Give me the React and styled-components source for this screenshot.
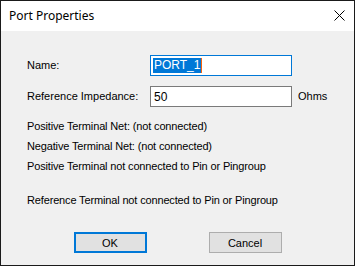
import React from "react";
import styled, { createGlobalStyle } from "styled-components";

const Global = createGlobalStyle`
  html, body { margin: 0; padding: 0; background: #f0f0f0; }
  * { box-sizing: border-box; }
`;

const Window = styled.div`
  width: 355px;
  height: 266px;
  border: 1px solid #1a1a1a;
  background: #f0f0f0;
  display: flex;
  flex-direction: column;
  font-family: "Liberation Sans", Arial, sans-serif;
  font-size: 11px;
  color: #000;
  overflow: hidden;
`;

const TitleBar = styled.div`
  height: 30px;
  flex: none;
  background: #fff;
  display: flex;
  align-items: center;
  justify-content: space-between;
  padding: 0 9px 1px 8px;
`;

const Title = styled.span`
  font-family: "Noto Sans", "Segoe UI", sans-serif;
  font-size: 12px;
  color: #000;
`;

const CloseBtn = styled.div`
  width: 12px;
  height: 12px;
  display: flex;
  align-items: center;
  justify-content: center;
`;

const Body = styled.div`
  flex: 1;
  display: flex;
  flex-direction: column;
  padding: 24px 0 0 26px;
`;

const FieldGrid = styled.div`
  display: grid;
  grid-template-columns: 117px 142px auto;
  column-gap: 6px;
  row-gap: 10px;
  align-items: center;
`;

const Label = styled.span`
  line-height: 13px;
`;

const Input = styled.div`
  height: 21px;
  background: #fff;
  border: 1px solid ${(p) => (p.$focused ? "#0078d7" : "#7a7a7a")};
  display: flex;
  align-items: center;
  padding-left: 2px;
  font-size: 12px;
`;

const Selected = styled.span`
  background: #0078d7;
  color: #fff;
  line-height: 15px;
  padding: 0 1px;
`;

const Caret = styled.span`
  width: 1px;
  height: 15px;
  background: #f7630c;
`;

const Plain = styled.span`
  padding-left: 1px;
`;

const Lines = styled.div`
  display: flex;
  flex-direction: column;
  margin-top: 9px;
  letter-spacing: -0.15px;
`;

const Line = styled.div`
  line-height: 20px;
  margin-top: ${(p) => (p.$gap ? "14px" : "0")};
`;

const Buttons = styled.div`
  display: flex;
  justify-content: center;
  gap: 62px;
  margin-top: 22px;
  margin-left: -26px;
`;

const Button = styled.div`
  width: 73px;
  height: 21px;
  background: #e1e1e1;
  border: ${(p) => (p.$default ? "2px solid #0078d7" : "1px solid #adadad")};
  display: flex;
  align-items: center;
  justify-content: center;
  font-size: 11px;
`;

export default function App() {
  return (
    <>
      <Global />
      <Window>
        <TitleBar>
          <Title>Port Properties</Title>
          <CloseBtn>
            <svg width="11" height="11" viewBox="0 0 11 11">
              <path d="M0.5 0.5 L10.5 10.5 M10.5 0.5 L0.5 10.5" stroke="#000" strokeWidth="1" fill="none" />
            </svg>
          </CloseBtn>
        </TitleBar>
        <Body>
          <FieldGrid>
            <Label>Name:</Label>
            <Input $focused>
              <Selected>PORT_1</Selected>
              <Caret />
            </Input>
            <span />
            <Label>Reference Impedance:</Label>
            <Input>
              <Plain>50</Plain>
            </Input>
            <Label>Ohms</Label>
          </FieldGrid>
          <Lines>
            <Line>Positive Terminal Net: (not connected)</Line>
            <Line>Negative Terminal Net: (not connected)</Line>
            <Line>Positive Terminal not connected to Pin or Pingroup</Line>
            <Line $gap>Reference Terminal not connected to Pin or Pingroup</Line>
          </Lines>
          <Buttons>
            <Button $default>OK</Button>
            <Button>Cancel</Button>
          </Buttons>
        </Body>
      </Window>
    </>
  );
}
